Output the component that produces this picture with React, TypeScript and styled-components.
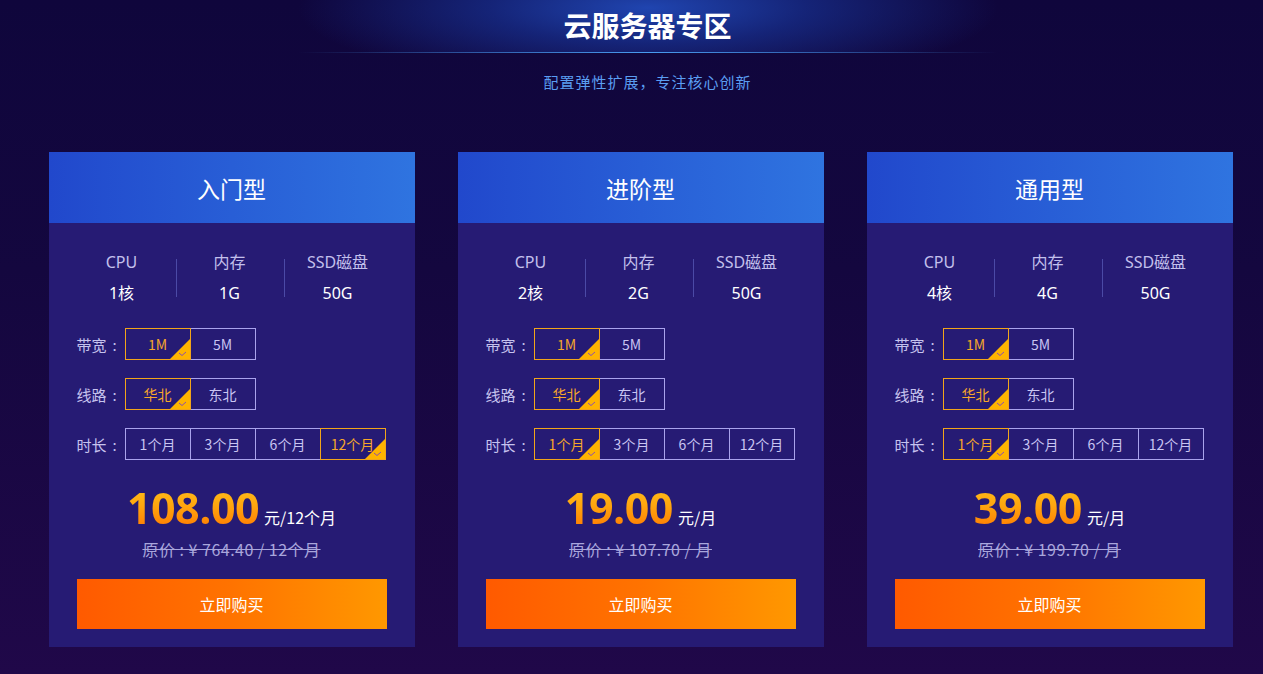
import React from "react";
import styled, { createGlobalStyle } from "styled-components";

const GlobalStyle = createGlobalStyle`
  html, body { margin: 0; padding: 0; }
  body {
    background: linear-gradient(180deg, #0f063c 0%, #14073f 40%, #200849 100%);
    min-height: 674px;
    font-family: "Noto Sans", "Noto Sans CJK SC", sans-serif;
  }
  * { box-sizing: border-box; }
`;

const Page = styled.div`
  width: 1263px;
  height: 674px;
  overflow: hidden;
  padding-left: 18px;
  display: flex;
  flex-direction: column;
  align-items: center;
`;

const TitleBand = styled.div`
  position: relative;
  width: 700px;
  height: 53px;
  margin-left: 14px;
  display: flex;
  align-items: center;
  justify-content: center;
  background: radial-gradient(ellipse 50% 150% at 50% 15%, rgba(32, 70, 178, 0.98) 0%, rgba(24, 52, 152, 0.65) 45%, rgba(15, 6, 60, 0) 100%);
  &::after {
    content: "";
    position: absolute;
    left: 0;
    right: 0;
    bottom: 0;
    height: 1px;
    background: linear-gradient(90deg, rgba(70, 150, 240, 0) 0%, #4a9cf0 50%, rgba(70, 150, 240, 0) 100%);
  }
`;

const Title = styled.h1`
  margin: 0;
  padding-bottom: 4px;
  font-family: "Noto Sans CJK SC", sans-serif;
  font-size: 28px;
  font-weight: 700;
  color: #ffffff;
  line-height: 36px;
`;

const Subtitle = styled.p`
  margin: 18px 0 0 14px;
  font-family: "Noto Sans CJK SC", sans-serif;
  font-size: 15px;
  letter-spacing: 1px;
  line-height: 22px;
  color: #5b9ef2;
`;

const Cards = styled.div`
  margin-top: 59px;
  display: flex;
  gap: 43px;
`;

const Card = styled.div`
  width: 366px;
  background: #261b74;
  display: flex;
  flex-direction: column;
`;

const CardHead = styled.div`
  height: 71px;
  background: linear-gradient(90deg, #2148cc 0%, #2f74e0 100%);
  display: flex;
  align-items: center;
  justify-content: center;
  font-family: "Noto Sans CJK SC", sans-serif;
  font-size: 23px;
  color: #ffffff;
`;

const CardBody = styled.div`
  padding: 28px 28px 18px;
  display: flex;
  flex-direction: column;
`;

const Specs = styled.div`
  display: grid;
  grid-template-columns: repeat(3, 108px);
  margin: 0 -9px;
`;

const Spec = styled.div<{ $divider?: boolean }>`
  display: flex;
  flex-direction: column;
  align-items: center;
  gap: 9px;
  position: relative;
  &::before {
    content: "";
    display: ${(p) => (p.$divider ? "block" : "none")};
    position: absolute;
    left: 0;
    top: 8px;
    width: 1px;
    height: 38px;
    background: #4b4aa6;
  }
`;

const SpecLabel = styled.span`
  font-size: 16px;
  line-height: 22px;
  color: #c3c0ec;
`;

const SpecValue = styled.span`
  font-size: 16px;
  line-height: 22px;
  color: #ffffff;
`;

const Options = styled.div`
  margin-top: 24px;
  display: flex;
  flex-direction: column;
  gap: 18px;
`;

const OptRow = styled.div`
  display: flex;
  align-items: center;
`;

const OptLabel = styled.span`
  width: 48px;
  display: flex;
  align-items: center;
  font-family: "Noto Sans CJK SC", sans-serif;
  font-size: 15px;
  color: #c6c3ee;
  white-space: nowrap;
`;

const Colon = styled.span`
  margin-left: 6px;
`;

const OptGroup = styled.div`
  display: flex;
`;

const Opt = styled.div<{ $active?: boolean }>`
  position: relative;
  width: 66px;
  height: 32px;
  margin-left: -1px;
  &:first-child { margin-left: 0; }
  border: 1px solid ${(p) => (p.$active ? "#f2a51a" : "#a9a3ec")};
  z-index: ${(p) => (p.$active ? 1 : 0)};
  display: flex;
  align-items: center;
  justify-content: center;
  font-family: "Noto Sans CJK SC", sans-serif;
  font-size: 14px;
  color: ${(p) => (p.$active ? "#f6a72a" : "#c9c5f2")};
  overflow: hidden;
`;

const Corner = styled.svg`
  position: absolute;
  right: 0;
  bottom: 0;
`;

const PriceRow = styled.div`
  margin-top: 22px;
  display: flex;
  align-items: baseline;
  justify-content: center;
  gap: 5px;
  height: 52px;
`;

const Price = styled.span`
  font-family: "Open Sans", sans-serif;
  font-size: 43px;
  font-weight: 700;
  line-height: 52px;
  letter-spacing: -0.5px;
  background: linear-gradient(180deg, #ffc41c 0%, #ffa60e 45%, #ff7200 100%);
  -webkit-background-clip: text;
  background-clip: text;
  color: transparent;
`;

const Unit = styled.span`
  font-family: "Noto Sans CJK SC", sans-serif;
  font-size: 16px;
  color: #ffffff;
`;

const Original = styled.div`
  margin-top: 5px;
  text-align: center;
  font-family: "Noto Sans CJK SC", sans-serif;
  font-size: 16px;
  letter-spacing: 0.5px;
  line-height: 20px;
  color: #a9a6dc;
  text-decoration: line-through;
`;

const BuyButton = styled.button`
  margin-top: 20px;
  height: 50px;
  width: 100%;
  border: none;
  background: linear-gradient(90deg, #ff5a00 0%, #ff7300 50%, #ff9800 100%);
  color: #ffffff;
  font-family: "Noto Sans CJK SC", sans-serif;
  font-size: 16px;
  cursor: pointer;
`;

const Check = () => (
  <Corner width="20" height="20" viewBox="0 0 20 20">
    <polygon points="20,0 20,20 0,20" fill="#ffb400" />
    <polyline points="9,14 12,16.5 16,13" fill="none" stroke="#8a4fb0" strokeWidth="1" />
  </Corner>
);

type Plan = {
  name: string;
  cpu: string;
  mem: string;
  disk: string;
  duration: number;
  price: string;
  unit: string;
  original: string;
};

const plans: Plan[] = [
  { name: "入门型", cpu: "1核", mem: "1G", disk: "50G", duration: 3, price: "108.00", unit: "元/12个月", original: "原价 : ¥ 764.40 / 12个月" },
  { name: "进阶型", cpu: "2核", mem: "2G", disk: "50G", duration: 0, price: "19.00", unit: "元/月", original: "原价 : ¥ 107.70 / 月" },
  { name: "通用型", cpu: "4核", mem: "4G", disk: "50G", duration: 0, price: "39.00", unit: "元/月", original: "原价 : ¥ 199.70 / 月" },
];

const durations = ["1个月", "3个月", "6个月", "12个月"];

const OptionGroup = ({ label, items, active }: { label: string; items: string[]; active: number }) => (
  <OptRow>
    <OptLabel>
      {label}
      <Colon>:</Colon>
    </OptLabel>
    <OptGroup>
      {items.map((it, i) => (
        <Opt key={it} $active={i === active}>
          {it}
          {i === active && <Check />}
        </Opt>
      ))}
    </OptGroup>
  </OptRow>
);

export default function App() {
  return (
    <>
      <GlobalStyle />
      <Page>
        <TitleBand>
          <Title>云服务器专区</Title>
        </TitleBand>
        <Subtitle>配置弹性扩展，专注核心创新</Subtitle>
        <Cards>
          {plans.map((p) => (
            <Card key={p.name}>
              <CardHead>{p.name}</CardHead>
              <CardBody>
                <Specs>
                  <Spec>
                    <SpecLabel>CPU</SpecLabel>
                    <SpecValue>{p.cpu}</SpecValue>
                  </Spec>
                  <Spec $divider>
                    <SpecLabel>内存</SpecLabel>
                    <SpecValue>{p.mem}</SpecValue>
                  </Spec>
                  <Spec $divider>
                    <SpecLabel>SSD磁盘</SpecLabel>
                    <SpecValue>{p.disk}</SpecValue>
                  </Spec>
                </Specs>
                <Options>
                  <OptionGroup label="带宽" items={["1M", "5M"]} active={0} />
                  <OptionGroup label="线路" items={["华北", "东北"]} active={0} />
                  <OptionGroup label="时长" items={durations} active={p.duration} />
                </Options>
                <PriceRow>
                  <Price>{p.price}</Price>
                  <Unit>{p.unit}</Unit>
                </PriceRow>
                <Original>{p.original}</Original>
                <BuyButton>立即购买</BuyButton>
              </CardBody>
            </Card>
          ))}
        </Cards>
      </Page>
    </>
  );
}
